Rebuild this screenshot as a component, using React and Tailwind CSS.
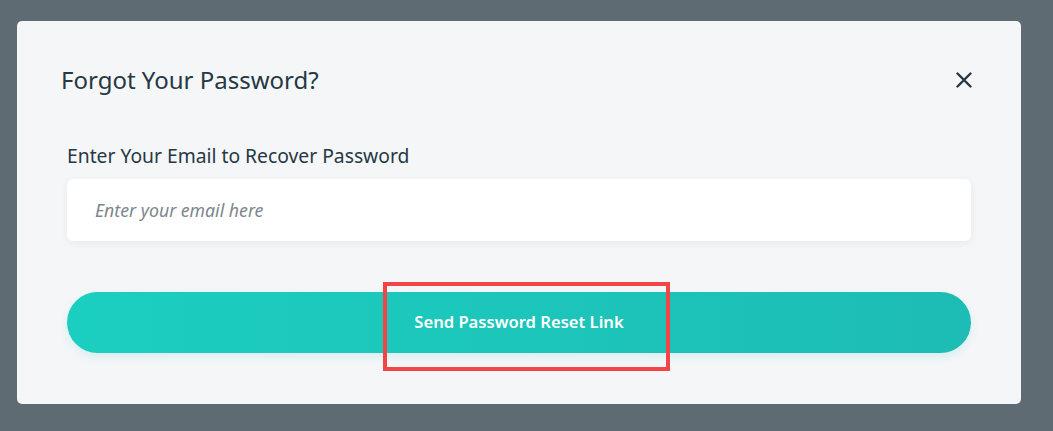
export default function App() {
  return (
    <div
      className="w-[1053px] h-[431px] bg-[#5f6b72] pt-[21px] pl-[17px] overflow-hidden"
      style={{ fontFamily: '"Noto Sans", "Open Sans", sans-serif' }}
    >
      {/* Modal */}
      <div className="relative w-[1004px] h-[383px] bg-[#f4f6f8] rounded-[5px] pt-[45px] px-[50px]">
        {/* Header */}
        <div className="flex items-center justify-between h-[28px]">
          <h2 className="ml-[-6px] text-[24px] leading-[28px] text-[#263842]">Forgot Your Password?</h2>
          <button className="flex items-center justify-center text-[#263842] mr-[-1px]">
            <svg width="16" height="16" viewBox="0 0 16 16" fill="none" stroke="currentColor" strokeWidth="2.4" strokeLinecap="round">
              <path d="M1.5 1.5 14.5 14.5M14.5 1.5 1.5 14.5" />
            </svg>
          </button>
        </div>

        {/* Field */}
        <label className="block mt-[50px] text-[19.3px] leading-[24px] text-[#263842]">
          Enter Your Email to Recover Password
        </label>
        <input
          type="email"
          placeholder="Enter your email here"
          className="mt-[11px] w-full h-[62px] rounded-[6px] bg-white px-[28px] text-[17.7px] italic text-[#263842] placeholder:text-[#7d868c] shadow-[0_2px_8px_rgba(0,0,0,0.06)] outline-none"
        />

        {/* Submit */}
        <button className="mt-[51px] w-full h-[61px] rounded-full bg-gradient-to-r from-[#1bcfc0] to-[#1dbcb4] shadow-[0_4px_8px_rgba(27,190,180,0.12)] text-white text-[16.6px] font-semibold">
          Send Password Reset Link
        </button>

        {/* Highlight annotation */}
        <div className="absolute left-[366px] top-[261px] w-[287px] h-[89px] border-[4px] border-[#f44546]" />
      </div>
    </div>
  );
}
